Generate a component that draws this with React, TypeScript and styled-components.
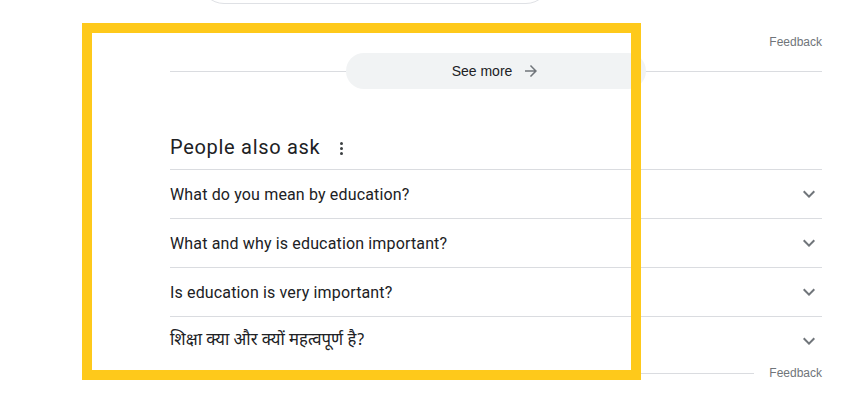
import React from "react";
import styled, { createGlobalStyle } from "styled-components";

const Global = createGlobalStyle`
  html, body { margin: 0; padding: 0; background: #fff; }
  body { font-family: Roboto, "Liberation Sans", Arial, sans-serif; color: #202124; }
`;

const Page = styled.div`
  position: relative;
  width: 867px;
  height: 404px;
  overflow: hidden;
`;

const SearchStub = styled.div`
  margin: -30px 0 0 200px;
  width: 348px;
  height: 32px;
  border: 1px solid #dfe1e5;
  border-radius: 0 0 24px 24px;
`;

const Column = styled.div`
  margin-left: 170px;
  width: 652px;
  display: flex;
  flex-direction: column;
`;

const FeedbackRow = styled.div<{ $top: number }>`
  display: flex;
  justify-content: flex-end;
  align-items: center;
  height: 16px;
  margin-top: ${(p) => p.$top}px;
`;

const FeedbackLink = styled.span`
  font-family: "Liberation Sans", Arial, sans-serif;
  font-size: 12px;
  color: #70757a;
`;

const SeeMoreBar = styled.div`
  position: relative;
  display: flex;
  justify-content: center;
  align-items: center;
  margin-top: 3px;
  height: 36px;
  &::before {
    content: "";
    position: absolute;
    left: 0;
    right: 0;
    top: 18px;
    height: 1px;
    background: #dadce0;
  }
`;

const SeeMoreButton = styled.div`
  position: relative;
  width: 300px;
  height: 36px;
  border-radius: 18px;
  background: #f1f3f4;
  display: flex;
  align-items: center;
  justify-content: center;
  gap: 10px;
  font-family: "Liberation Sans", Arial, sans-serif;
  font-size: 14px;
  color: #202124;
`;

const Heading = styled.div`
  display: flex;
  align-items: center;
  height: 35px;
  margin-top: 45px;
  gap: 20px;
  font-size: 20px;
  letter-spacing: 0.7px;
  color: #202124;
  padding-bottom: 9px;
  box-sizing: border-box;
`;

const Kebab = styled.span`
  display: flex;
  flex-direction: column;
  gap: 2px;
  margin-top: 2px;
  span {
    width: 3px;
    height: 3px;
    border-radius: 50%;
    background: #3c4043;
  }
`;

const Question = styled.div<{ $hindi?: boolean }>`
  display: flex;
  align-items: center;
  justify-content: space-between;
  height: 48px;
  border-top: 1px solid #dadce0;
  font-size: ${(p) => (p.$hindi ? "16.7px" : "16px")};
  letter-spacing: ${(p) => (p.$hindi ? "0" : "0.15px")};
  font-family: ${(p) =>
    p.$hindi
      ? '"Noto Sans Devanagari", "Lohit Devanagari", "Noto Sans", sans-serif'
      : 'Roboto, "Liberation Sans", Arial, sans-serif'};
  color: #202124;
`;

const Chevron = styled.svg`
  width: 24px;
  height: 24px;
  margin-right: 1px;
  flex-shrink: 0;
`;

const BottomRow = styled.div`
  display: flex;
  align-items: center;
  gap: 15px;
  height: 16px;
  &::before {
    content: "";
    flex: 1;
    height: 1px;
    background: #dadce0;
  }
`;

const Frame = styled.div`
  position: absolute;
  left: 82px;
  top: 23px;
  width: 559px;
  height: 357px;
  border: 10px solid #fec91b;
  box-sizing: border-box;
  pointer-events: none;
`;

const questions = [
  "What do you mean by education?",
  "What and why is education important?",
  "Is education is very important?",
];

const ChevronIcon = () => (
  <Chevron viewBox="0 0 24 24">
    <path d="M7.41 8.59 12 13.17l4.59-4.58L18 10l-6 6-6-6z" fill="#70757a" />
  </Chevron>
);

export default function App() {
  return (
    <Page>
      <Global />
      <SearchStub />
      <Column>
        <FeedbackRow $top={30}>
          <FeedbackLink>Feedback</FeedbackLink>
        </FeedbackRow>
        <SeeMoreBar>
          <SeeMoreButton>
            <span>See more</span>
            <svg width="18" height="18" viewBox="0 0 24 24">
              <path d="M12 4l-1.41 1.41L16.17 11H4v2h12.17l-5.58 5.59L12 20l8-8z" fill="#70757a" />
            </svg>
          </SeeMoreButton>
        </SeeMoreBar>
        <Heading>
          <span>People also ask</span>
          <Kebab>
            <span />
            <span />
            <span />
          </Kebab>
        </Heading>
        {questions.map((q) => (
          <Question key={q}>
            <span>{q}</span>
            <ChevronIcon />
          </Question>
        ))}
        <Question $hindi>
          <span>शिक्षा क्या और क्यों महत्वपूर्ण है?</span>
          <ChevronIcon />
        </Question>
        <BottomRow>
          <FeedbackLink>Feedback</FeedbackLink>
        </BottomRow>
      </Column>
      <Frame />
    </Page>
  );
}
